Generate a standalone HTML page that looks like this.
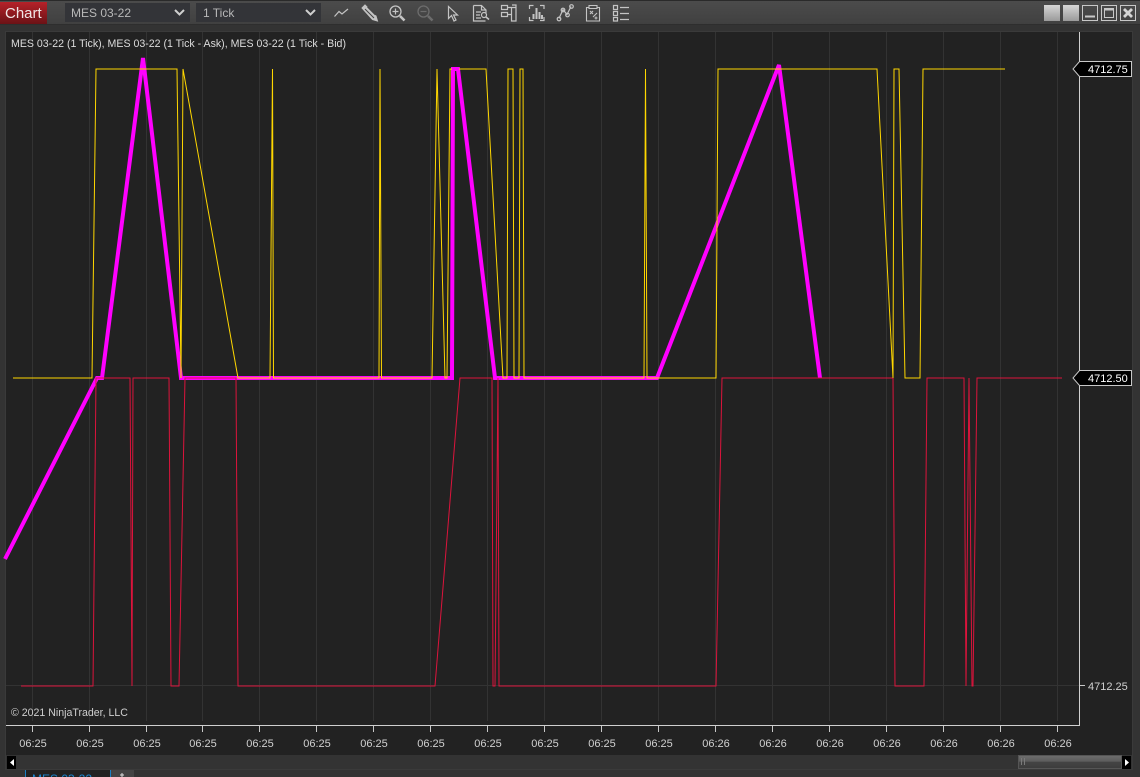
<!DOCTYPE html>
<html><head><meta charset="utf-8"><style>
html,body{margin:0;padding:0;background:#333}
body{width:1140px;height:777px;overflow:hidden;position:relative}
svg{position:absolute;left:0;top:0;display:block}
text{font-family:"Liberation Sans",Arial,sans-serif}
.ic{fill:none;stroke:#c4c4c4;stroke-width:1.2}
</style></head><body>
<svg width="1140" height="777" viewBox="0 0 1140 777" xmlns="http://www.w3.org/2000/svg">
<defs>
<linearGradient id="tb" x1="0" y1="0" x2="0" y2="1"><stop offset="0" stop-color="#4c4c4c"/><stop offset="1" stop-color="#404040"/></linearGradient>
<linearGradient id="rd" x1="0" y1="0" x2="0" y2="1"><stop offset="0" stop-color="#b52229"/><stop offset="1" stop-color="#6b1216"/></linearGradient>
<linearGradient id="gb" x1="0" y1="0" x2="0" y2="1"><stop offset="0" stop-color="#d6d6d6"/><stop offset="1" stop-color="#9a9a9a"/></linearGradient>
<linearGradient id="th" x1="0" y1="0" x2="0" y2="1"><stop offset="0" stop-color="#6e6e6e"/><stop offset="0.45" stop-color="#5c5c5c"/><stop offset="0.5" stop-color="#444"/><stop offset="1" stop-color="#3c3c3c"/></linearGradient>
</defs>
<!-- window background -->
<rect width="1140" height="777" fill="#333"/>
<rect y="0" width="1140" height="25" fill="url(#tb)"/>
<rect y="0" width="1140" height="1" fill="#2a2a2a"/>
<rect y="24" width="1140" height="1" fill="#2e2e2e"/>
<!-- Chart button -->
<rect x="0" y="2" width="47" height="22" fill="url(#rd)"/>
<text x="5" y="18" font-size="15" fill="#f0e6e6">Chart</text>
<!-- dropdowns -->
<rect x="65" y="3" width="125" height="19" fill="#333438"/>
<text x="71" y="17" font-size="12" fill="#b8b8b8">MES 03-22</text>
<path d="M175 10l4.500 4.500 4.500-4.500" fill="none" stroke="#cfcfcf" stroke-width="2"/>
<rect x="196" y="3" width="125" height="19" fill="#333438"/>
<text x="203" y="17" font-size="12" fill="#b8b8b8">1 Tick</text>
<path d="M306 10l4.500 4.500 4.500-4.500" fill="none" stroke="#cfcfcf" stroke-width="2"/>
<!-- toolbar icons -->
<g class="ic">
<path d="M334.500 16.500l4.500-5 3 2.500 6-5"/>
<path d="M362 8l3-3 11 11 1.500 5-5-1.500z" fill="#c4c4c4" stroke-width="1"/><path d="M365 9l9 9M367.500 7l8 8" stroke="#444" stroke-width="1"/>
<circle cx="395.500" cy="11.500" r="5.500" stroke-width="1.300"/><path d="M392.500 11.500h6M395.500 8.500v6"/><path d="M400 16l4.500 4.500" stroke-width="2.600"/>
<g stroke="#6c6c6c"><circle cx="423.500" cy="11.500" r="5.500" stroke-width="1.300"/><path d="M420.500 11.500h6"/><path d="M428 16l4.500 4.500" stroke-width="2.600"/></g>
<path d="M448.500 6.500v12l3-3 2.500 5.500 2-1-2.500-5h4z"/>
<path d="M473.500 5.500h8l4.500 4.500v3M473.500 5.500v15.500h12M481.500 5.500v4.500h4.500M476 12h5M476 15h4M476 18h5"/><circle cx="484" cy="15" r="2.500"/><path d="M486 17l3 2.500" stroke-width="1.600"/>
<path d="M501.500 5.500h6v4h-6zM501.500 12.500h6v4h-6zM507.500 7.500h8M507.500 14.500h4M511.500 7.500v13.500h4.500v-16h-4"/>
<path d="M529.500 9v-3.500h4M540 5.500h4v3.500M529.500 17v3.500h4M544 17v3.500h-4"/><path d="M533.500 19v-5M536.500 19v-11M539.500 19v-7M542 19v-4" stroke-width="2"/>
<path d="M559 18.500l4-9 4 5 4-8"/><circle cx="559" cy="19" r="1.800"/><circle cx="563" cy="10" r="1.800"/><circle cx="567.500" cy="15" r="1.800"/><circle cx="571.500" cy="6.500" r="1.800"/>
<path d="M589 7.500h-2.500v13.500h13v-13.500h-2.500M589 5.500h8v3h-8zM590 11l3 3M593 11l-3 3M593 17l4-4M594.500 18l3 0M596 16.500l0 3" stroke-width="1.100"/>
<path d="M613.500 5.500h4v4h-4zM613.500 11.500h4v4h-4zM613.500 17.500h4v3.500h-4zM620 7.500h9M620 13.500h9M620 19.500h9"/>
</g>
<!-- window buttons -->
<rect x="1044" y="5" width="16" height="16" fill="url(#gb)"/>
<rect x="1063" y="5" width="16" height="16" fill="url(#gb)"/>
<g fill="none" stroke="#c8c8c8">
<rect x="1082.500" y="5.500" width="15" height="15"/><rect x="1101.500" y="5.500" width="15" height="15"/><rect x="1120.500" y="5.500" width="15" height="15"/>
<path d="M1085 16.500h10" stroke-width="2"/><path d="M1104.500 8.500h9v9h-9z"/><path d="M1104.500 9.500h9" stroke-width="2"/>
<path d="M1124 9l8 8M1132 9l-8 8" stroke-width="2.800" stroke="#d4d4d4"/>
</g>
<!-- chart panel -->
<rect x="5.500" y="31.500" width="1127" height="738" fill="#222" stroke="#3a3a3a"/>
<!-- grid -->
<g stroke="#333" stroke-width="1" fill="none">
<path d="M32.500 32V721M89.500 32V721M146.500 32V721M202.500 32V721M259.500 32V721M316.500 32V721M373.500 32V721M430.500 32V721M487.500 32V721M544.500 32V721M601.500 32V721M658.500 32V721M715.500 32V721M772.500 32V721M829.500 32V721M886.500 32V721M943.500 32V721M1000.500 32V721M1057.500 32V721"/>
<path d="M6 685.500H1079"/>
</g>
<!-- series -->
<polyline fill="none" stroke="#ff00ff" stroke-width="4" stroke-linejoin="miter" points="5,559 97,378 102,378 143,58 181,378 452,378 453,69 458,69 495,378 657,378 779,65 820,378"/>
<polyline fill="none" stroke="#dc143c" stroke-width="1" points="21,686 93,686 96,378 130,378 132,686 133,378 169,378 171,686 179,686 185,378 236,378 238,686 435,686 460,378 492,378 493,686 495,686 498,378 499,686 716,686 722,378 893,378 895,686 924,686 927,378 964,378 966,686 969,378 972,686 973,686 977,378 1062,378"/>
<polyline fill="none" stroke="#ffd700" stroke-width="1" points="13,378 92,378 96,69 177,69 181,378 183,69 238,378 270,378 272.500,69 273.500,378 379,378 380,69 381.500,378 432,378 437,69 445,378 447,378 450,69 486,69 503,378 507,378 508,69 513,69 514,378 519,378 520,69 523,69 524,378 644,378 645.500,69 647,378 716,378 718,69 877,69 893,378 894,69 899,69 905,378 920,378 923,69 1005,69"/>
<path d="M452 69H459" stroke="#ff00ff" stroke-width="4" fill="none"/>
<!-- axes -->
<path d="M1079.500 32V725.500H6" fill="none" stroke="#d0d0d0"/>
<path d="M32.500 726v6M89.500 726v6M146.500 726v6M202.500 726v6M259.500 726v6M316.500 726v6M373.500 726v6M430.500 726v6M487.500 726v6M544.500 726v6M601.500 726v6M658.500 726v6M715.500 726v6M772.500 726v6M829.500 726v6M886.500 726v6M943.500 726v6M1000.500 726v6M1057.500 726v6M1080 685.500h5" fill="none" stroke="#c8c8c8"/>
<!-- texts -->
<text x="11" y="47" font-size="10.6" fill="#dcdcdc">MES 03-22 (1 Tick), MES 03-22 (1 Tick - Ask), MES 03-22 (1 Tick - Bid)</text>
<text x="11" y="716" font-size="10.6" fill="#cfcfcf">© 2021 NinjaTrader, LLC</text>
<g font-size="11" fill="#d0d0d0" text-anchor="middle">
<text x="33" y="747">06:25</text><text x="90" y="747">06:25</text><text x="147" y="747">06:25</text><text x="203" y="747">06:25</text><text x="260" y="747">06:25</text><text x="317" y="747">06:25</text><text x="374" y="747">06:25</text><text x="431" y="747">06:25</text><text x="488" y="747">06:25</text><text x="545" y="747">06:25</text><text x="602" y="747">06:25</text><text x="659" y="747">06:25</text><text x="716" y="747">06:26</text><text x="773" y="747">06:26</text><text x="830" y="747">06:26</text><text x="887" y="747">06:26</text><text x="944" y="747">06:26</text><text x="1001" y="747">06:26</text><text x="1058" y="747">06:26</text>
</g>
<text x="1088" y="690" font-size="11" fill="#d0d0d0">4712.25</text>
<!-- price markers -->
<g fill="#000" stroke="#c8c8c8">
<path d="M1079.500 61.500H1131.500V76.500H1079.500L1073 69z"/>
<path d="M1079.500 370.500H1131.500V385.500H1079.500L1073 378z"/>
</g>
<text x="1088" y="73" font-size="11" fill="#fff">4712.75</text>
<text x="1088" y="382" font-size="11" fill="#fff">4712.50</text>
<!-- scrollbar -->
<rect x="6" y="755" width="1126" height="14" fill="#333"/>
<rect x="7" y="756" width="9" height="13" fill="#000"/>
<path d="M10 762.500l4-3.500v7z" fill="#fff"/>
<rect x="1122" y="756" width="9" height="13" fill="#000"/>
<path d="M1129 762.500l-4-3.500v7z" fill="#fff"/>
<rect x="1018.500" y="755.500" width="103" height="13" fill="url(#th)" stroke="#555"/>
<path d="M1021.500 758v7M1024.500 758v7" stroke="#7a7a7a"/>
<!-- tabs -->
<rect x="25" y="770" width="85" height="7" fill="#222"/>
<path d="M25.500 770v7M110.500 770v7" stroke="#1a7fc4"/>
<text x="32" y="783" font-size="12" fill="#1a86d0">MES 03-22</text>
<rect x="111" y="770" width="23" height="7" fill="#444"/>
<path d="M122 773v4M120 775h4" stroke="#ddd"/>
</svg>
</body></html>
